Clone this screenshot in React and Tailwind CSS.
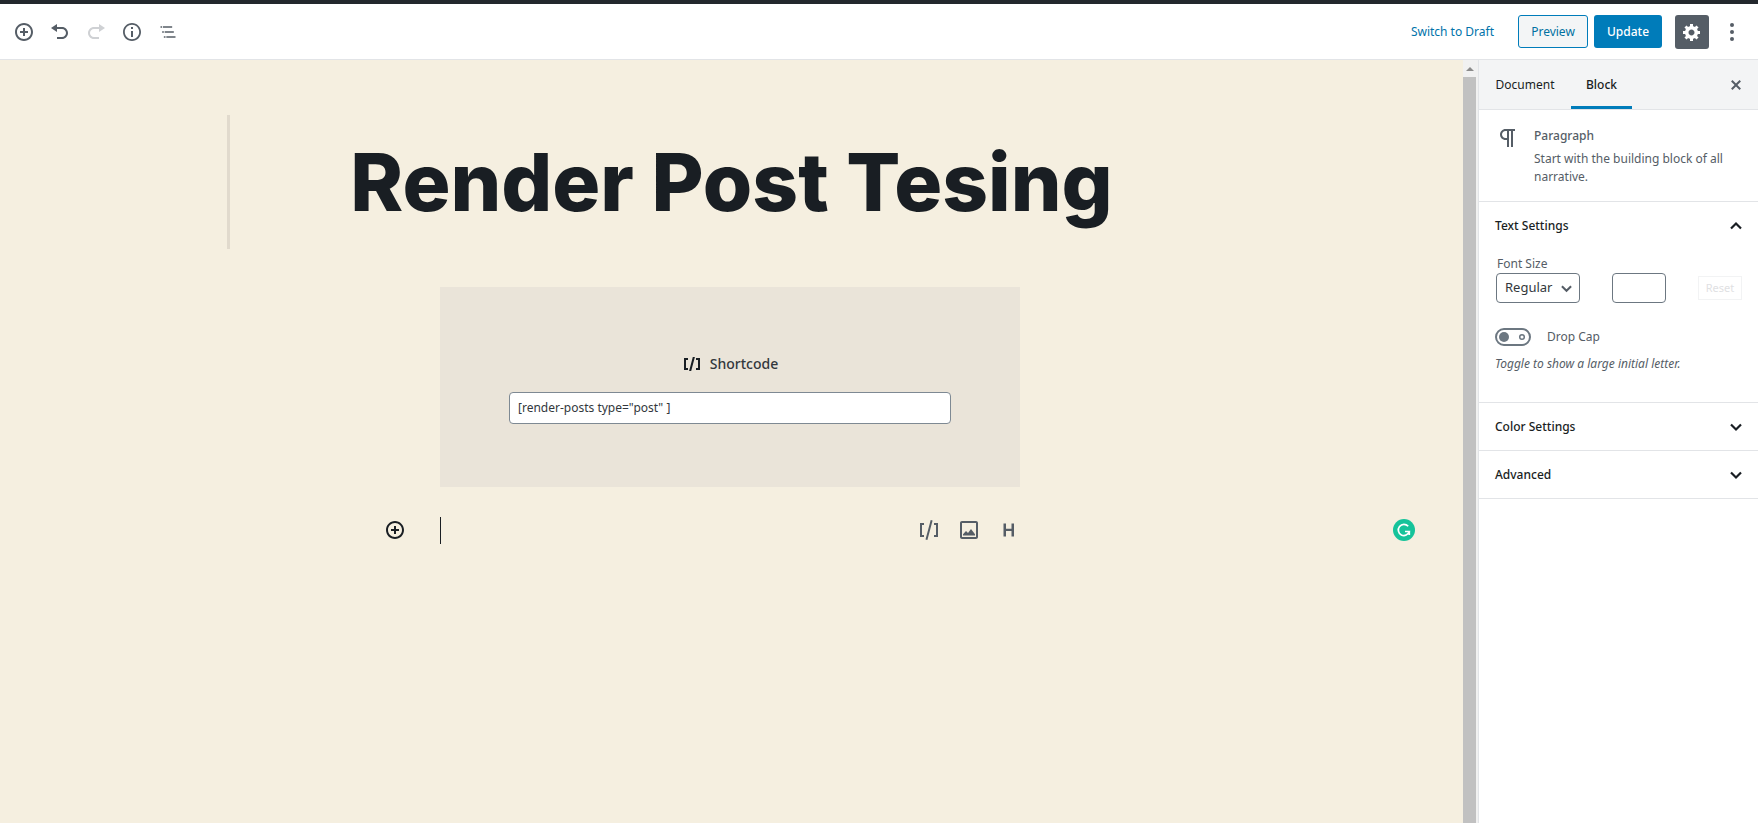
import { useState } from "react";

const PATHS = {
  insert: "M10 1c-5 0-9 4-9 9s4 9 9 9 9-4 9-9-4-9-9-9zm0 16c-3.9 0-7-3.1-7-7s3.1-7 7-7 7 3.1 7 7-3.1 7-7 7zm1-11H9v3H6v2h3v3h2v-3h3V9h-3V6z",
  undo: "M12 5H7V2L1 6l6 4V7h5c2.2 0 4 1.8 4 4s-1.8 4-4 4H7v2h5c3.3 0 6-2.7 6-6s-2.7-6-6-6z",
  redo: "M8 5h5V2l6 4-6 4V7H8c-2.2 0-4 1.8-4 4s1.8 4 4 4h5v2H8c-3.3 0-6-2.7-6-6s2.7-6 6-6z",
  info: "M10 1c-5 0-9 4-9 9s4 9 9 9 9-4 9-9-4-9-9-9zm0 16.200c-4 0-7.200-3.200-7.200-7.200S6 2.800 10 2.800s7.200 3.200 7.200 7.200-3.200 7.200-7.200 7.200zM9 5h2v2H9zM9 9h2v6H9z",
  outline: "M5 5H3v2h2V5zm3 8h11v-2H8v2zm9-8H6v2h11V5zM7 11H5v2h2v-2zm0 8h2v-2H7v2zm3-2v2h11v-2H10z",
  gear: "M18 12h-2.18c-.17.7-.44 1.35-.81 1.93l1.54 1.54-2.1 2.1-1.54-1.54c-.58.36-1.23.63-1.91.79V19H8v-2.18c-.68-.16-1.33-.43-1.91-.79l-1.54 1.54-2.12-2.12 1.54-1.54c-.36-.58-.63-1.23-.79-1.91H1V9.03h2.17c.16-.7.44-1.35.8-1.94L2.43 5.55l2.1-2.1 1.54 1.54c.58-.37 1.24-.64 1.93-.81V2h3v2.18c.68.16 1.33.43 1.91.79l1.54-1.54 2.12 2.12-1.54 1.54c.36.59.64 1.24.8 1.94H18V12zm-8.5 1.5c1.66 0 3-1.34 3-3s-1.34-3-3-3-3 1.34-3 3 1.34 3 3 3z",
  close: "M14.95 6.46L11.41 10l3.54 3.54-1.41 1.41L10 11.42l-3.53 3.53-1.42-1.42L8.58 10 5.05 6.47l1.42-1.42L10 8.58l3.54-3.53z",
  shortcodeBold: "M6 14H4V6h2V4H2v12h4M7.100 17h2.100l3.700-14h-2.100M14 4v2h2v8h-2v2h4V4",
  shortcode: "M8.500 21.400l1.900.5 5.200-19.300-1.900-.5-5.200 19.300zM3 19h4v-2H5V7h2V5H3v14zM17 5v2h2v10h-2v2h4V5h-4z",
  image: "M19 3H5c-1.100 0-2 .9-2 2v14c0 1.100.9 2 2 2h14c1.100 0 2-.9 2-2V5c0-1.100-.9-2-2-2zm0 16H5V5h14v14zM6 17.500v-1.200l3-3.300 2 2 3-4 4 5.300v1.200z",
  heading: "M6.500 5.500h2.500v5.300h5.500V5.500h2.500v13h-2.500v-5.400H9v5.400H6.500z",
  paragraph: "M11 5v7H9.500C7.600 12 6 10.400 6 8.500S7.600 5 9.500 5H11m8-2H9.500C6.500 3 4 5.500 4 8.500S6.500 14 9.500 14H11v7h2V5h2v16h2V5h2V3z",
};

function Icon({ name, box = 20, className = "size-5" }) {
  return (
    <svg viewBox={`0 0 ${box} ${box}`} className={className} fill="currentColor" aria-hidden="true">
      <path d={PATHS[name]} />
    </svg>
  );
}

function Chevron({ up, className = "size-3" }) {
  return (
    <svg viewBox="0 0 12 12" className={className} fill="none" stroke="currentColor" strokeWidth="2.200" aria-hidden="true">
      <path d={up ? "M1 8.500L6 3.500L11 8.500" : "M1 3.500L6 8.500L11 3.500"} />
    </svg>
  );
}

function IconButton({ label, className = "size-9 text-[#555d66]", children, ...rest }) {
  return (
    <button type="button" aria-label={label} className={`flex shrink-0 items-center justify-center ${className}`} {...rest}>
      {children}
    </button>
  );
}

function Header() {
  return (
    <header className="flex h-14 shrink-0 items-center justify-between border-b border-[#e2e4e7] bg-white pr-2 pl-1.5">
      <div className="flex">
        <IconButton label="Add block"><Icon name="insert" /></IconButton>
        <IconButton label="Undo"><Icon name="undo" /></IconButton>
        <IconButton label="Redo" disabled className="size-9 text-[#cfd1d4]"><Icon name="redo" /></IconButton>
        <IconButton label="Content structure"><Icon name="info" /></IconButton>
        <IconButton label="Block navigation"><Icon name="outline" box={24} className="size-5" /></IconButton>
      </div>
      <div className="flex items-center">
        <button type="button" className="mr-6 text-[#0073aa]">Switch to Draft</button>
        <button type="button" className="mr-1.5 h-[33px] w-[70px] rounded-[3px] border border-[#007cba] bg-[#f3f5f6] text-[#0071a1]">Preview</button>
        <button type="button" className="mr-[13px] h-[33px] w-[68px] rounded-[3px] bg-[#007cba] font-medium text-white">Update</button>
        <IconButton label="Settings" className="mr-[5px] size-[34px] rounded-[3px] bg-[#555d66] text-white"><Icon name="gear" /></IconButton>
        <IconButton label="More tools">
          <svg viewBox="0 0 20 20" className="size-5" fill="currentColor" aria-hidden="true">
            <circle cx="10" cy="3" r="2" />
            <circle cx="10" cy="10" r="2" />
            <circle cx="10" cy="17" r="2" />
          </svg>
        </IconButton>
      </div>
    </header>
  );
}

function Canvas() {
  return (
    <main className="min-w-0 flex-1 bg-[#f5efe0] pt-[55px] pr-[3px]">
      <div className="mx-auto flex h-[134px] max-w-[1006px] items-center justify-center border-l-3 border-[#e1dacd]">
        <h1 className="font-[Inter,sans-serif] text-[80px] leading-none font-extrabold whitespace-nowrap text-[#191e23]">Render Post Tesing</h1>
      </div>
      <section className="mx-auto mt-[38px] flex h-[200px] max-w-[580px] flex-col justify-center bg-[#eae4d9] px-[69px] pt-px">
        <label htmlFor="shortcode" className="mb-4 flex items-center justify-center gap-2 text-sm leading-6 font-medium text-[#32373c]">
          <Icon name="shortcodeBold" className="size-5 text-[#191e23]" />
          Shortcode
        </label>
        <input id="shortcode" defaultValue={'[render-posts type="post" ]'} className="h-8 w-full rounded border border-[#7e8993] bg-white px-2 text-xs text-[#32373c]" />
      </section>
      <div className="mt-[25px] grid h-9 grid-cols-[1fr_minmax(0,580px)_1fr] items-center">
        <div className="flex justify-end pr-[27px]">
          <IconButton label="Add block" className="size-9 text-[#191e23]"><Icon name="insert" /></IconButton>
        </div>
        <div className="flex items-center justify-between">
          <div className="h-[27px] w-px bg-[#191e23]" />
          <div className="-mr-[7px] flex gap-1 text-[#555d66]">
            <IconButton label="Add Shortcode"><Icon name="shortcode" box={24} className="size-6" /></IconButton>
            <IconButton label="Add Image"><Icon name="image" box={24} className="size-6" /></IconButton>
            <IconButton label="Add Heading"><Icon name="heading" box={24} className="size-6" /></IconButton>
          </div>
        </div>
        <div className="flex justify-end pr-[45px]">
          <svg viewBox="0 0 22 22" className="size-[22px]" fill="none" role="img" aria-label="Grammarly">
            <circle cx="11" cy="11" r="11" fill="#15c39a" />
            <path d="M15.200 7.300A5.600 5.600 0 1 0 16.300 12.500H12M16.300 12.500V16" stroke="#fff" strokeWidth="1.700" />
          </svg>
        </div>
      </div>
    </main>
  );
}

function Scrollbar() {
  return (
    <div className="flex w-[15px] shrink-0 flex-col bg-[#f1f1f1]" aria-hidden="true">
      <div className="flex h-[17px] w-[13px] items-center justify-center">
        <svg viewBox="0 0 8 4" className="h-1 w-2" fill="#8b8b8b"><path d="M0 4L4 0l4 4z" /></svg>
      </div>
      <div className="w-[13px] flex-1 bg-[#c1c1c1]" />
    </div>
  );
}

function PanelToggle({ title, open, onClick }) {
  return (
    <button type="button" aria-expanded={open} onClick={onClick} className="flex h-[47px] w-full items-center justify-between px-4 font-medium text-[#191e23]">
      {title}
      <Chevron up={open} />
    </button>
  );
}

function Sidebar() {
  const [open, setOpen] = useState(true);
  const [dropCap, setDropCap] = useState(false);
  return (
    <aside className="w-[280px] shrink-0 border-l border-[#e2e4e7] bg-white text-[#555d66]">
      <div className="flex h-[50px] items-stretch border-b border-[#e2e4e7] bg-[#f3f4f5] pr-3 text-[#191e23]">
        <button type="button" className="w-[92px]">Document</button>
        <button type="button" className="w-[61px] border-b-3 border-[#007cba] pt-[3px] font-medium">Block</button>
        <IconButton label="Close settings" className="ml-auto w-5 text-[#555d66]"><Icon name="close" /></IconButton>
      </div>
      <div className="flex h-[92px] gap-[14px] border-b border-[#e2e4e7] pt-4 pr-4 pl-[17px]">
        <Icon name="paragraph" box={24} className="size-6 shrink-0" />
        <div>
          <h2 className="mb-1 leading-5 font-medium">Paragraph</h2>
          <p className="leading-[18px]">Start with the building block of all narrative.</p>
        </div>
      </div>
      <section className="border-b border-[#e2e4e7]">
        <PanelToggle title="Text Settings" open={open} onClick={() => setOpen(!open)} />
        {open && (
          <div className="px-4 pt-1.5 pb-[25px]">
            <label htmlFor="size" className="block pl-0.5 leading-[18px]">Font Size</label>
            <div className="flex items-center justify-between pl-px">
              <div className="relative">
                <select id="size" className="h-[30px] w-[84px] appearance-none rounded border border-[#6c7781] bg-white pl-2 text-[13px] text-[#32373c]">
                  <option>Regular</option>
                </select>
                <span className="pointer-events-none absolute inset-y-0 right-2 flex items-center">
                  <Chevron className="size-[11px]" />
                </span>
              </div>
              <input aria-label="Custom size" className="h-[30px] w-[54px] rounded border border-[#6c7781] px-2" />
              <button type="button" disabled className="h-6 w-11 border border-[#f2f3f4] text-[11px] text-[#dfe1e3]">Reset</button>
            </div>
            <label className="mt-[25px] flex items-center gap-4 leading-[18px]">
              <input type="checkbox" checked={dropCap} onChange={(e) => setDropCap(e.target.checked)} className="peer sr-only" />
              <svg viewBox="0 0 36 18" className="h-[18px] w-9" fill="none" aria-hidden="true">
                <rect x="1" y="1" width="34" height="16" rx="8" stroke="#6c7781" strokeWidth="2" />
                <circle cx={dropCap ? 27 : 9} cy="9" r="5" fill="#6c7781" />
                <circle cx={dropCap ? 9 : 27} cy="9" r="2.300" stroke="#6c7781" strokeWidth="1.500" />
              </svg>
              Drop Cap
            </label>
            <p className="mt-[9px] mb-1 leading-[18px] italic">Toggle to show a large initial letter.</p>
          </div>
        )}
      </section>
      <section className="border-b border-[#e2e4e7]"><PanelToggle title="Color Settings" open={false} /></section>
      <section className="border-b border-[#e2e4e7]"><PanelToggle title="Advanced" open={false} /></section>
    </aside>
  );
}

export default function App() {
  return (
    <div className="flex min-h-screen flex-col border-t-4 border-[#23282d] bg-white font-['Noto_Sans',sans-serif] text-xs">
      <Header />
      <div className="flex flex-1 items-stretch">
        <Canvas />
        <Scrollbar />
        <Sidebar />
      </div>
    </div>
  );
}
